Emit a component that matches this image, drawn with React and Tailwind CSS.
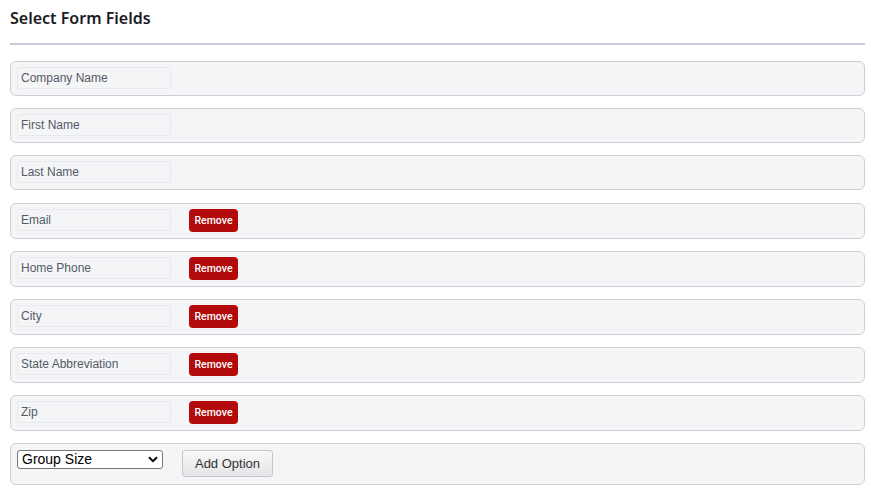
import React from "react";

const fields = [
  { name: "Company Name", remove: false },
  { name: "First Name", remove: false },
  { name: "Last Name", remove: false },
  { name: "Email", remove: true },
  { name: "Home Phone", remove: true },
  { name: "City", remove: true },
  { name: "State Abbreviation", remove: true },
  { name: "Zip", remove: true },
];

export default function App() {
  return (
    <div className="w-[871px] h-[493px] bg-white overflow-hidden" style={{ fontFamily: '"Liberation Sans", Arial, sans-serif' }}>
      <div className="ml-[10px] w-[855px]">
        <h2
          className="pt-[7px] text-[16px] leading-[22px] font-semibold text-[#1b1b1f]"
          style={{ fontFamily: '"Noto Sans", "Open Sans", sans-serif' }}
        >
          Select Form Fields
        </h2>
        <div className="mt-[14px] h-[2px] bg-[#c8ccd4]" />
        <div className="mt-[16px] flex flex-col gap-[12px]">
          {fields.map((f) => (
            <div
              key={f.name}
              className={
                "flex items-start gap-[18px] rounded-[6px] border border-[#cdcfd4] bg-[#f4f5f7] px-[6px] pt-[5px] pb-[6px]" +
                (f.name === "Email" ? " mt-[1px]" : "")
              }
            >
              <div className="w-[154px] h-[22px] flex items-center px-[3px] border border-[#e8e9ec] rounded-[2px] text-[12px] text-[#555a66]">
                {f.name}
              </div>
              {f.remove && (
                <button className="h-[23px] w-[49px] rounded-[4px] bg-[#b30b0b] text-white text-[10.5px] font-medium flex items-center justify-center" style={{ fontFamily: 'Roboto, "Liberation Sans", sans-serif' }}>
                  Remove
                </button>
              )}
            </div>
          ))}
          <div className="flex items-start gap-[19px] rounded-[6px] border border-[#cdcfd4] bg-[#f4f5f7] px-[6px] pt-[6px] pb-[7px]">
            <div className="relative w-[146px] h-[19px] bg-white border border-[#767676] rounded-[3px] flex items-center pl-[4px] text-[14px] text-black">
              Group Size
              <svg className="absolute right-[4px] top-[5px]" width="10" height="7" viewBox="0 0 10 7">
                <path d="M1 1.2 L5 5.2 L9 1.2" fill="none" stroke="#000" strokeWidth="2" />
              </svg>
            </div>
            <button className="w-[91px] h-[27px] rounded-[3px] border border-[#c4c6ca] bg-gradient-to-b from-[#f8f8f8] to-[#e4e5e7] text-[13px] text-[#333]">
              Add Option
            </button>
          </div>
        </div>
      </div>
    </div>
  );
}
